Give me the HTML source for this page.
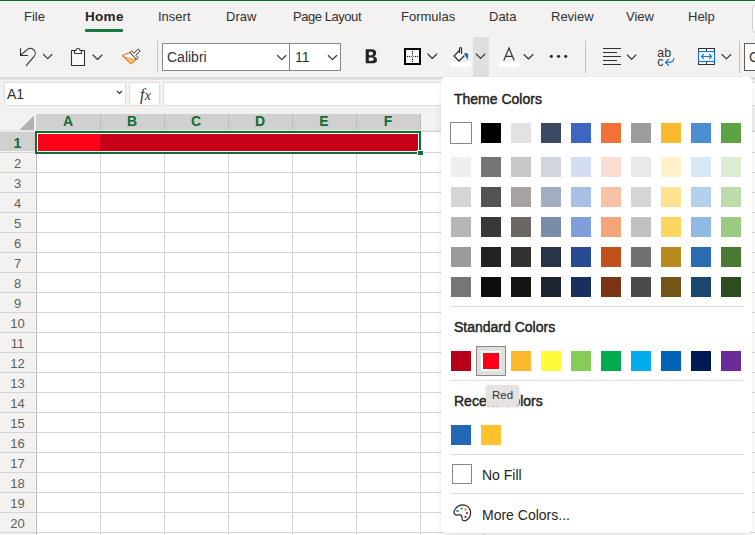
<!DOCTYPE html>
<html><head><meta charset="utf-8">
<style>
*{margin:0;padding:0;box-sizing:border-box}
html,body{width:755px;height:535px;overflow:hidden;background:#fff;font-family:"Liberation Sans",sans-serif;color:#252423}
.a{position:absolute}
#topbar{left:0;top:0;width:755px;height:1px;background:#0b6a2e}
#ribbon{left:0;top:1px;width:755px;height:76px;background:#f3f2f1}
.tab{position:absolute;top:9px;font-size:13px;line-height:15px;color:#323130;white-space:nowrap}
#fbar{left:0;top:77px;width:755px;height:37px;background:#f3f2f1}
#shadow{left:0;top:77px;width:755px;height:3px;background:linear-gradient(#dedddc,#dad9d8 50%,#e6e5e4)}
.box{position:absolute;background:#fff;border:1px solid #e1dfdd}
#grid{left:0;top:114px;width:755px;height:421px;background:#fff}
.colh{position:absolute;top:114px;height:17px;background:#d2d0ce;border-right:1px solid #bebbb8;color:#0e6b37;font-weight:bold;font-size:13px;text-align:center;line-height:17px}
.rowh{position:absolute;left:0;width:36px;height:20px;background:#f3f2f1;border-right:1px solid #bdbbb9;border-bottom:1px solid #e1dfdd;color:#605e5c;font-size:13px;text-align:center;line-height:20px}
.vl{position:absolute;top:131px;width:1px;height:404px;background:#e1dfdd}
.hl{position:absolute;left:36px;width:405px;height:1px;background:#e1dfdd}
#panel{left:441px;top:77px;width:311px;height:456px;background:#fff;border-radius:4px;box-shadow:0 6px 10px -2px rgba(0,0,0,.12),0 0 1px rgba(0,0,0,.14)}
.ph{position:absolute;left:13px;font-size:14px;font-weight:normal;-webkit-text-stroke:0.45px #252423;color:#252423;white-space:nowrap}
.sw{position:absolute;width:20px;height:20px}
.sep{position:absolute;left:9px;width:294px;height:1px;background:#e1dfdd}
.colt{top:114px;height:17px;color:#0e6b37;font-weight:bold;font-size:14px;text-align:center;line-height:15px}
.rowt{left:0;width:35px;height:20px;color:#605e5c;font-size:13px;text-align:center;line-height:25px}
.rowt.sel{color:#0e6b37;font-weight:bold;height:21px;font-size:14px;line-height:22px}
</style></head><body>
<div class="a" id="ribbon"></div>
<div class="a" id="topbar"></div>
<div class="tab" style="left:24px">File</div>
<div class="tab" style="left:85px;font-weight:bold;color:#252423;font-size:13.5px;letter-spacing:0.3px">Home</div>
<div class="a" style="left:85px;top:29px;width:38px;height:3px;background:#107c41;border-radius:1px"></div>
<div class="tab" style="left:158px">Insert</div>
<div class="tab" style="left:226px">Draw</div>
<div class="tab" style="left:293px;letter-spacing:-0.45px">Page Layout</div>
<div class="tab" style="left:401px">Formulas</div>
<div class="tab" style="left:489px">Data</div>
<div class="tab" style="left:551px">Review</div>
<div class="tab" style="left:626px">View</div>
<div class="tab" style="left:688px">Help</div>


<svg class="a" style="left:0;top:0" width="755" height="77" viewBox="0 0 755 77">
 <!-- font boxes -->
 <rect x="162.5" y="43.5" width="178" height="27" fill="#fff" stroke="#8a8886" stroke-width="1"/>
 <rect x="289" y="43.5" width="1" height="27" fill="#8a8886"/>
 <rect x="744.5" y="43.5" width="30" height="27" fill="#fff" stroke="#605e5c" stroke-width="1"/>
 <rect x="752.5" y="5.5" width="30" height="27" rx="3" fill="#fff" stroke="#d2d0ce" stroke-width="1"/>
 <g fill="none" stroke="#323130" stroke-width="1.1" stroke-linecap="round" stroke-linejoin="round">
  <!-- undo -->
  <path d="M20.5,48.5 V55.5 H27.5"/>
  <path d="M20.8,55 L27.2,49.6 A4.85,4.85 0 0 1 33.9,56.6 L26.3,65.7"/>
  <path d="M43.5,54.5 L47.7,58.7 L51.9,54.5"/>
  <!-- clipboard -->
  <path d="M74.5,50.5 H71.5 V65.5 H84.5 V50.5 H81.5" fill="#faf9f8"/>
  <path d="M74.5,50.5 H76 A2,2 0 0 1 80,50.5 H81.5 V53.5 H74.5 Z" fill="#faf9f8"/>
  <path d="M93,55 L97.5,59.5 L102,55"/>
  <!-- chevrons -->
  <path d="M277.5,55.5 L281.7,59.7 L285.9,55.5"/>
  <path d="M328.3,55.5 L332.5,59.7 L336.7,55.5"/>
  <path d="M427.8,54 L432.3,58.5 L436.8,54"/>
  <path d="M476.2,54 L480.6,58.4 L485,54"/>
  <path d="M524,54.5 L528.5,59 L533,54.5"/>
  <path d="M627.3,55 L631.6,59.3 L635.9,55"/>
  <path d="M722,54.5 L726.4,58.9 L730.8,54.5"/>
 </g>
 <!-- format painter -->
 <path d="M130,52.5 L122.5,55.5 L131,63.8 L136.5,59.3 Z" fill="#fff" stroke="#e8742c" stroke-width="1.2" stroke-linejoin="round"/>
 <path d="M126.5,58.3 L135.8,59.8 L131,63.3 Z" fill="#f9c46b"/><path d="M124,57 L136,60" stroke="#e8742c" stroke-width=".8"/>
 <path d="M130,52.4 L131.6,50.9 L133.9,53.2 L138.3,49.1 L140.2,51 L135.9,55.4 L138,57.6 L136.4,59.3 Z" fill="#fff" stroke="#323130" stroke-width="1" stroke-linejoin="round"/>
 <!-- dividers -->
 <rect x="157" y="41" width="1" height="32" fill="#c8c6c4"/>
 <rect x="585" y="41" width="1" height="32" fill="#c8c6c4"/>
 <rect x="739" y="41" width="1" height="32" fill="#c8c6c4"/>
 <!-- borders icon -->
 <rect x="405" y="49" width="15" height="15" fill="#fff" stroke="#000" stroke-width="2"/>
 <g fill="#222">
  <circle cx="412.5" cy="51.5" r=".7"/><circle cx="412.5" cy="53.5" r=".7"/><circle cx="412.5" cy="59.5" r=".7"/><circle cx="412.5" cy="61.5" r=".7"/>
  <circle cx="407.5" cy="56.5" r=".7"/><circle cx="409.5" cy="56.5" r=".7"/><circle cx="415.5" cy="56.5" r=".7"/><circle cx="417.5" cy="56.5" r=".7"/>
 </g>
 <g fill="#222"><circle cx="411.3" cy="56.5" r=".55"/><circle cx="413.7" cy="56.5" r=".55"/><circle cx="412.5" cy="55.3" r=".55"/><circle cx="412.5" cy="57.7" r=".55"/></g>
 <!-- pressed dropdown -->
 <rect x="473" y="37" width="16" height="40" fill="#e1dfdd"/>
 <path d="M476.2,54 L480.6,58.4 L485,54" fill="none" stroke="#323130" stroke-width="1.1" stroke-linecap="round" stroke-linejoin="round"/>
 <!-- fill bucket -->
 <path d="M459.5,50.5 L454,56 L459,61 L464.5,55.5" fill="#fff" stroke="#222" stroke-width="1.1" stroke-linejoin="round"/>
 <path d="M459.5,53 V48.5 A1,1 0 0 1 461.5,48.5 V54" fill="none" stroke="#222" stroke-width="1.1"/>
 <path d="M464,53.5 C466,52.5 468.5,53 468.2,55.5 C468,57.5 467.6,59 467.3,60.2 C466.5,58 466,56 464,53.5 Z" fill="#0f6cbd"/>
 <rect x="451" y="62" width="20" height="5" fill="#fff"/>
 <!-- font color -->
 <rect x="499" y="62" width="20" height="5" fill="#fff"/>
 <path d="M503.8,60.5 L509,48 L514.2,60.5 M505.6,56.3 H512.4" fill="none" stroke="#323130" stroke-width="1.2"/>
 <!-- dots -->
 <g fill="#323130"><circle cx="551.3" cy="56.3" r="1.6"/><circle cx="558.5" cy="56.3" r="1.6"/><circle cx="565.7" cy="56.3" r="1.6"/></g>
 <!-- align -->
 <g fill="#323130"><rect x="603" y="48" width="18" height="1"/><rect x="603" y="52" width="14" height="1"/><rect x="603" y="56" width="18" height="1"/><rect x="603" y="60" width="14" height="1"/><rect x="603" y="64" width="18" height="1"/></g>
 <!-- wrap -->
 <text x="657.3" y="57.3" font-family="Liberation Sans" font-size="12.3" fill="#323130">ab</text>
 <text x="657.3" y="66" font-family="Liberation Sans" font-size="12.3" fill="#323130">c</text>
 <path d="M673.8,58.3 C674,61.5 671,62.6 665.6,62.5 M668.5,59.5 L665.5,62.5 L668.5,65.5" fill="none" stroke="#1878d0" stroke-width="1.1" stroke-linecap="round" stroke-linejoin="round"/>
 <!-- merge -->
 <rect x="698.5" y="48.5" width="16" height="16" fill="#fff" stroke="#323130" stroke-width="1"/>
 <rect x="706" y="48.5" width="1" height="16" fill="#323130"/>
 <rect x="698.5" y="51.5" width="16" height="10" fill="#f8f8f8" stroke="#1878d0" stroke-width="1.2"/>
 <path d="M701.5,56.5 H711.5 M703.5,54.5 L701.5,56.5 L703.5,58.5 M709.5,54.5 L711.5,56.5 L709.5,58.5" fill="none" stroke="#1878d0" stroke-width="1.1" stroke-linecap="round" stroke-linejoin="round"/>
</svg>
<div class="a" style="left:167px;top:49px;font-size:14px;color:#323130">Calibri</div>
<div class="a" style="left:295px;top:49px;font-size:14px;color:#323130">11</div>
<svg class="a" style="left:360px;top:44px" width="22" height="24" viewBox="360 44 22 24"><path fill-rule="evenodd" fill="#252423" d="M365.7,49.3 H371.6 C374.6,49.3 376.2,50.8 376.2,52.9 C376.2,54.6 375.2,55.8 373.6,56.2 C375.7,56.5 377,57.9 377,59.9 C377,62.3 375.1,63.3 372.2,63.3 H365.7 Z M368.8,51.7 V55.2 H371 C372.4,55.2 373.1,54.6 373.1,53.4 C373.1,52.3 372.4,51.7 371,51.7 Z M368.8,57.5 V60.9 H371.3 C372.9,60.9 373.8,60.3 373.8,59.1 C373.8,58 372.9,57.5 371.3,57.5 Z"/></svg>
<div class="a" style="left:749px;top:49px;font-size:14px;color:#323130">G</div>

<div class="a" id="fbar"></div>
<div class="a" id="shadow"></div>
<div class="box" style="left:4px;top:82px;width:122px;height:24px"></div>
<div class="a" style="left:7px;top:86px;font-size:14px;color:#323130">A1</div>

<div class="box" style="left:129px;top:82px;width:31px;height:24px"></div>
<div class="box" style="left:163px;top:82px;width:600px;height:24px"></div>
<svg class="a" style="left:0;top:77px" width="170" height="37"><path d="M117,14 L119.5,16.5 L122,14" fill="none" stroke="#323130" stroke-width="1.1"/></svg>
<div class="a" style="left:140px;top:86px;font-family:'Liberation Serif',serif;font-style:italic;font-size:16px;color:#323130;letter-spacing:0.3px">f<span style="font-size:14px">x</span></div>

<div class="a" id="grid"></div>
<div class="a" style="left:0;top:114px;width:36px;height:17px;background:#f3f2f1"></div>
<svg class="a" style="left:0;top:114px" width="36" height="17"><path d="M34,1.5 V16 H19.5 Z" fill="#b1b1b1"/></svg>
<div class="a" style="left:36px;top:114px;width:384px;height:17px;background:#d2d0ce"></div>
<div class="a" style="left:420px;top:114px;width:335px;height:17px;background:#f3f2f1"></div>
<div class="a" style="left:100px;top:114px;width:1px;height:17px;background:#bdbbb9"></div>
<div class="a" style="left:164px;top:114px;width:1px;height:17px;background:#bdbbb9"></div>
<div class="a" style="left:228px;top:114px;width:1px;height:17px;background:#bdbbb9"></div>
<div class="a" style="left:292px;top:114px;width:1px;height:17px;background:#bdbbb9"></div>
<div class="a" style="left:356px;top:114px;width:1px;height:17px;background:#bdbbb9"></div>
<div class="a" style="left:420px;top:114px;width:1px;height:17px;background:#bdbbb9"></div>
<div class="a" style="left:0;top:130px;width:755px;height:1px;background:#e8e6e4"></div>
<div class="a colt" style="left:36px;width:64px">A</div>
<div class="a colt" style="left:100px;width:64px">B</div>
<div class="a colt" style="left:164px;width:64px">C</div>
<div class="a colt" style="left:228px;width:64px">D</div>
<div class="a colt" style="left:292px;width:64px">E</div>
<div class="a colt" style="left:356px;width:64px">F</div>
<div class="a" style="left:0;top:131px;width:36px;height:1px;background:#ebebea"></div>
<div class="a rowt sel" style="top:132px;height:20px;background:#d2d0ce">1</div>
<div class="a rowt" style="top:151px;background:#f3f2f1">2</div>
<div class="a rowt" style="top:171px;background:#f3f2f1">3</div>
<div class="a rowt" style="top:191px;background:#f3f2f1">4</div>
<div class="a rowt" style="top:211px;background:#f3f2f1">5</div>
<div class="a rowt" style="top:231px;background:#f3f2f1">6</div>
<div class="a rowt" style="top:251px;background:#f3f2f1">7</div>
<div class="a rowt" style="top:271px;background:#f3f2f1">8</div>
<div class="a rowt" style="top:291px;background:#f3f2f1">9</div>
<div class="a rowt" style="top:311px;background:#f3f2f1">10</div>
<div class="a rowt" style="top:331px;background:#f3f2f1">11</div>
<div class="a rowt" style="top:351px;background:#f3f2f1">12</div>
<div class="a rowt" style="top:371px;background:#f3f2f1">13</div>
<div class="a rowt" style="top:391px;background:#f3f2f1">14</div>
<div class="a rowt" style="top:411px;background:#f3f2f1">15</div>
<div class="a rowt" style="top:431px;background:#f3f2f1">16</div>
<div class="a rowt" style="top:451px;background:#f3f2f1">17</div>
<div class="a rowt" style="top:471px;background:#f3f2f1">18</div>
<div class="a rowt" style="top:491px;background:#f3f2f1">19</div>
<div class="a rowt" style="top:511px;background:#f3f2f1">20</div>
<div class="a rowt" style="top:531px;background:#f3f2f1">21</div>
<div class="a" style="left:0;top:152px;width:36px;height:1px;background:#d4d4d4"></div>
<div class="a" style="left:36px;top:152px;width:719px;height:1px;background:#d4d4d4"></div>
<div class="a" style="left:0;top:172px;width:36px;height:1px;background:#d4d4d4"></div>
<div class="a" style="left:36px;top:172px;width:719px;height:1px;background:#d4d4d4"></div>
<div class="a" style="left:0;top:192px;width:36px;height:1px;background:#d4d4d4"></div>
<div class="a" style="left:36px;top:192px;width:719px;height:1px;background:#d4d4d4"></div>
<div class="a" style="left:0;top:212px;width:36px;height:1px;background:#d4d4d4"></div>
<div class="a" style="left:36px;top:212px;width:719px;height:1px;background:#d4d4d4"></div>
<div class="a" style="left:0;top:232px;width:36px;height:1px;background:#d4d4d4"></div>
<div class="a" style="left:36px;top:232px;width:719px;height:1px;background:#d4d4d4"></div>
<div class="a" style="left:0;top:252px;width:36px;height:1px;background:#d4d4d4"></div>
<div class="a" style="left:36px;top:252px;width:719px;height:1px;background:#d4d4d4"></div>
<div class="a" style="left:0;top:272px;width:36px;height:1px;background:#d4d4d4"></div>
<div class="a" style="left:36px;top:272px;width:719px;height:1px;background:#d4d4d4"></div>
<div class="a" style="left:0;top:292px;width:36px;height:1px;background:#d4d4d4"></div>
<div class="a" style="left:36px;top:292px;width:719px;height:1px;background:#d4d4d4"></div>
<div class="a" style="left:0;top:312px;width:36px;height:1px;background:#d4d4d4"></div>
<div class="a" style="left:36px;top:312px;width:719px;height:1px;background:#d4d4d4"></div>
<div class="a" style="left:0;top:332px;width:36px;height:1px;background:#d4d4d4"></div>
<div class="a" style="left:36px;top:332px;width:719px;height:1px;background:#d4d4d4"></div>
<div class="a" style="left:0;top:352px;width:36px;height:1px;background:#d4d4d4"></div>
<div class="a" style="left:36px;top:352px;width:719px;height:1px;background:#d4d4d4"></div>
<div class="a" style="left:0;top:372px;width:36px;height:1px;background:#d4d4d4"></div>
<div class="a" style="left:36px;top:372px;width:719px;height:1px;background:#d4d4d4"></div>
<div class="a" style="left:0;top:392px;width:36px;height:1px;background:#d4d4d4"></div>
<div class="a" style="left:36px;top:392px;width:719px;height:1px;background:#d4d4d4"></div>
<div class="a" style="left:0;top:412px;width:36px;height:1px;background:#d4d4d4"></div>
<div class="a" style="left:36px;top:412px;width:719px;height:1px;background:#d4d4d4"></div>
<div class="a" style="left:0;top:432px;width:36px;height:1px;background:#d4d4d4"></div>
<div class="a" style="left:36px;top:432px;width:719px;height:1px;background:#d4d4d4"></div>
<div class="a" style="left:0;top:452px;width:36px;height:1px;background:#d4d4d4"></div>
<div class="a" style="left:36px;top:452px;width:719px;height:1px;background:#d4d4d4"></div>
<div class="a" style="left:0;top:472px;width:36px;height:1px;background:#d4d4d4"></div>
<div class="a" style="left:36px;top:472px;width:719px;height:1px;background:#d4d4d4"></div>
<div class="a" style="left:0;top:492px;width:36px;height:1px;background:#d4d4d4"></div>
<div class="a" style="left:36px;top:492px;width:719px;height:1px;background:#d4d4d4"></div>
<div class="a" style="left:0;top:512px;width:36px;height:1px;background:#d4d4d4"></div>
<div class="a" style="left:36px;top:512px;width:719px;height:1px;background:#d4d4d4"></div>
<div class="a" style="left:0;top:532px;width:36px;height:1px;background:#d4d4d4"></div>
<div class="a" style="left:36px;top:532px;width:719px;height:1px;background:#d4d4d4"></div>
<div class="a" style="left:36px;top:131px;width:719px;height:1px;background:#d4d4d4"></div>
<div class="a" style="left:36px;top:131px;width:1px;height:404px;background:#bdbbb9"></div>
<div class="a" style="left:100px;top:131px;width:1px;height:404px;background:#d4d4d4"></div>
<div class="a" style="left:164px;top:131px;width:1px;height:404px;background:#d4d4d4"></div>
<div class="a" style="left:228px;top:131px;width:1px;height:404px;background:#d4d4d4"></div>
<div class="a" style="left:292px;top:131px;width:1px;height:404px;background:#d4d4d4"></div>
<div class="a" style="left:356px;top:131px;width:1px;height:404px;background:#d4d4d4"></div>
<div class="a" style="left:420px;top:131px;width:1px;height:404px;background:#d4d4d4"></div>
<div class="a" style="left:484px;top:131px;width:1px;height:404px;background:#d4d4d4"></div>
<div class="a" style="left:35px;top:131px;width:386px;height:23px;border:2px solid #0e6c37;background:#fff"></div>
<div class="a" style="left:38px;top:134px;width:62px;height:17px;background:#ff0019"></div>
<div class="a" style="left:100px;top:134px;width:318px;height:17px;background:#c50018"></div>
<div class="a" style="left:417px;top:150px;width:7px;height:6px;background:#fff"></div>
<div class="a" style="left:418px;top:151px;width:5px;height:4px;background:#0e6c37"></div>
<div class="a" id="panel">
<div class="ph" style="top:14px">Theme Colors</div>
<div class="sw" style="left:9px;top:45px;width:22px;height:22px;border:1px solid #8a8886;background:#fff"></div>
<div class="sw" style="left:40px;top:46px;background:#000000"></div>
<div class="sw" style="left:70px;top:46px;background:#e2e2e2"></div>
<div class="sw" style="left:100px;top:46px;background:#3b4963"></div>
<div class="sw" style="left:130px;top:46px;background:#3c66c1"></div>
<div class="sw" style="left:160px;top:46px;background:#f07236"></div>
<div class="sw" style="left:190px;top:46px;background:#9d9d9d"></div>
<div class="sw" style="left:220px;top:46px;background:#fdb92e"></div>
<div class="sw" style="left:250px;top:46px;background:#4b8fd2"></div>
<div class="sw" style="left:280px;top:46px;background:#5ca443"></div>
<div class="sw" style="left:10px;top:80px;background:#efefef"></div>
<div class="sw" style="left:40px;top:80px;background:#747474"></div>
<div class="sw" style="left:70px;top:80px;background:#c9c7c6"></div>
<div class="sw" style="left:100px;top:80px;background:#d0d5de"></div>
<div class="sw" style="left:130px;top:80px;background:#d4ddf0"></div>
<div class="sw" style="left:160px;top:80px;background:#fbded2"></div>
<div class="sw" style="left:190px;top:80px;background:#e9e9e9"></div>
<div class="sw" style="left:220px;top:80px;background:#fff1c9"></div>
<div class="sw" style="left:250px;top:80px;background:#d8e8f5"></div>
<div class="sw" style="left:280px;top:80px;background:#ddedd4"></div>
<div class="sw" style="left:10px;top:110px;background:#d5d5d5"></div>
<div class="sw" style="left:40px;top:110px;background:#535353"></div>
<div class="sw" style="left:70px;top:110px;background:#a6a2a1"></div>
<div class="sw" style="left:100px;top:110px;background:#a2afc2"></div>
<div class="sw" style="left:130px;top:110px;background:#a9bfe5"></div>
<div class="sw" style="left:160px;top:110px;background:#f7c3a4"></div>
<div class="sw" style="left:190px;top:110px;background:#d5d5d5"></div>
<div class="sw" style="left:220px;top:110px;background:#fee290"></div>
<div class="sw" style="left:250px;top:110px;background:#b3d1ec"></div>
<div class="sw" style="left:280px;top:110px;background:#bddcaa"></div>
<div class="sw" style="left:10px;top:140px;background:#b6b6b6"></div>
<div class="sw" style="left:40px;top:140px;background:#393939"></div>
<div class="sw" style="left:70px;top:140px;background:#6b6765"></div>
<div class="sw" style="left:100px;top:140px;background:#7a8ca7"></div>
<div class="sw" style="left:130px;top:140px;background:#819edb"></div>
<div class="sw" style="left:160px;top:140px;background:#f4a57a"></div>
<div class="sw" style="left:190px;top:140px;background:#c1c1c1"></div>
<div class="sw" style="left:220px;top:140px;background:#fed55e"></div>
<div class="sw" style="left:250px;top:140px;background:#8fbae4"></div>
<div class="sw" style="left:280px;top:140px;background:#9bcb83"></div>
<div class="sw" style="left:10px;top:170px;background:#9b9b9b"></div>
<div class="sw" style="left:40px;top:170px;background:#222222"></div>
<div class="sw" style="left:70px;top:170px;background:#343131"></div>
<div class="sw" style="left:100px;top:170px;background:#293546"></div>
<div class="sw" style="left:130px;top:170px;background:#284a90"></div>
<div class="sw" style="left:160px;top:170px;background:#c0511a"></div>
<div class="sw" style="left:190px;top:170px;background:#717171"></div>
<div class="sw" style="left:220px;top:170px;background:#b98a1e"></div>
<div class="sw" style="left:250px;top:170px;background:#2b6bb0"></div>
<div class="sw" style="left:280px;top:170px;background:#4a7a32"></div>
<div class="sw" style="left:10px;top:200px;background:#767676"></div>
<div class="sw" style="left:40px;top:200px;background:#0d0d0d"></div>
<div class="sw" style="left:70px;top:200px;background:#161515"></div>
<div class="sw" style="left:100px;top:200px;background:#1d2431"></div>
<div class="sw" style="left:130px;top:200px;background:#1a2f5e"></div>
<div class="sw" style="left:160px;top:200px;background:#7a3514"></div>
<div class="sw" style="left:190px;top:200px;background:#4b4b4b"></div>
<div class="sw" style="left:220px;top:200px;background:#725619"></div>
<div class="sw" style="left:250px;top:200px;background:#1b4670"></div>
<div class="sw" style="left:280px;top:200px;background:#2d4d20"></div>
<div class="sep" style="top:229px"></div>
<div class="ph" style="top:242px">Standard Colors</div>
<div class="sw" style="left:10px;top:274px;background:#b8001a"></div>
<div class="a" style="left:35px;top:269px;width:30px;height:30px;background:#e1dfdd;border:1px solid #8a8886"></div>
<div class="a" style="left:40px;top:274px;width:20px;height:20px;background:#fff"></div>
<div class="a" style="left:42px;top:276px;width:16px;height:16px;background:#fe0016"></div>
<div class="sw" style="left:70px;top:274px;background:#fdb92e"></div>
<div class="sw" style="left:100px;top:274px;background:#fdfb3a"></div>
<div class="sw" style="left:130px;top:274px;background:#85cd56"></div>
<div class="sw" style="left:160px;top:274px;background:#00aa4f"></div>
<div class="sw" style="left:190px;top:274px;background:#00acec"></div>
<div class="sw" style="left:220px;top:274px;background:#0063b7"></div>
<div class="sw" style="left:250px;top:274px;background:#001a56"></div>
<div class="sw" style="left:280px;top:274px;background:#6a2b9a"></div>
<div class="sep" style="top:303px"></div>
<div class="ph" style="top:316px">Recent Colors</div>
<div class="sw" style="left:10px;top:348px;background:#2268b4"></div>
<div class="sw" style="left:40px;top:348px;background:#fdc22e"></div>
<div class="sep" style="top:377px"></div>
<div class="a" style="left:11px;top:387px;width:20px;height:20px;border:1px solid #8a8886;background:#fff"></div>
<div class="a" style="left:41px;top:390px;font-size:14px;color:#252423">No Fill</div>
<div class="sep" style="top:416px"></div>
<svg class="a" style="left:11px;top:426px" width="20" height="20" viewBox="0 0 20 20">
<path d="M3,6.5 C5,2.5 10,1 14,2.5 C18,4 19.5,9 18,13 C16.8,16.5 13,18.5 11,17.5 C9.5,16.8 10.5,14 9.5,12.5 C8.5,11 6,12.5 4,12 C1.5,11.3 1.5,8.5 3,6.5 Z" fill="#fff" stroke="#252423" stroke-width="1.2"/>
<rect x="4.5" y="7" width="2" height="2" fill="#0f6cbd"/><rect x="8.5" y="4.5" width="2" height="2" fill="#2d9d3a"/><rect x="12.5" y="5.5" width="2" height="2" fill="#e8742c"/><rect x="14" y="9" width="2" height="2" fill="#e0373a"/><rect x="12.5" y="13" width="2" height="2" fill="#8a2ea3"/>
</svg>
<div class="a" style="left:41px;top:430px;font-size:14px;color:#252423">More Colors...</div>
</div>
<div class="a" style="left:486px;top:385px;width:33px;height:21px;background:#e6e2e1;border-radius:2px;box-shadow:0 1px 3px rgba(0,0,0,.14);font-size:11.5px;color:#323130;text-align:center;line-height:20px">Red</div>
</body></html>
